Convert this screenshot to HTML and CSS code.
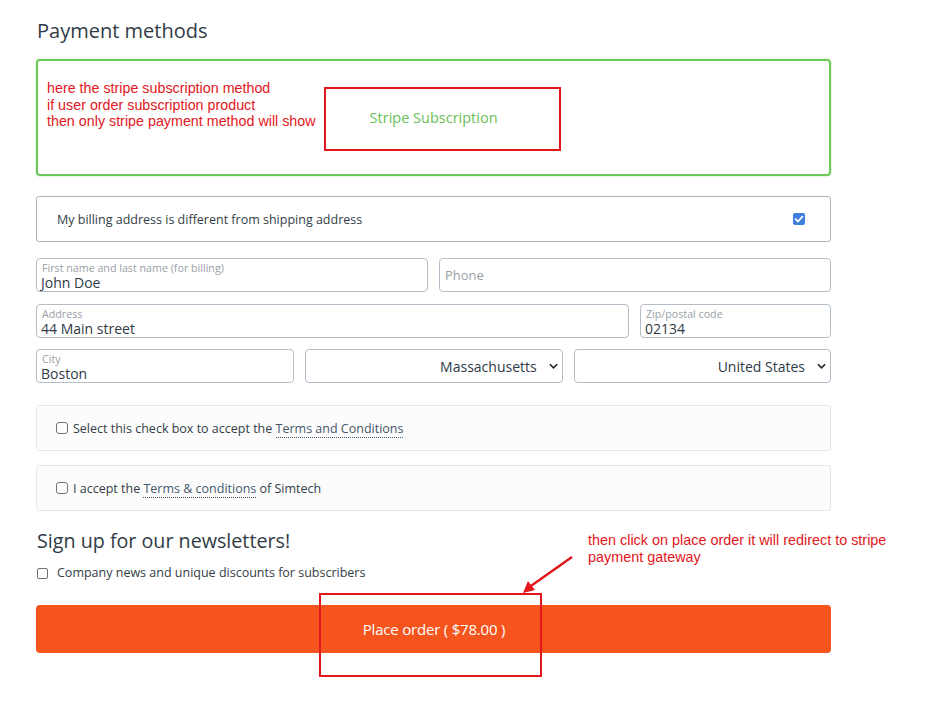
FILE: index.html
```html
<!DOCTYPE html>
<html>
<head>
<meta charset="utf-8">
<link rel="stylesheet" href="styles.css">
</head>
<body>
<div class="page">
  <h2 class="title">Payment methods</h2>

  <div class="method-box">
    <div class="note">here the stripe subscription method<br>if user order subscription product<br>then only stripe payment method will show</div>
    <div class="stripe-box"><span class="stripe-label">Stripe Subscription</span></div>
  </div>

  <div class="billing-toggle">
    <span>My billing address is different from shipping address</span>
    <span class="cb checked"><svg viewBox="0 0 12 12" width="12" height="12"><path d="M2.6 6.2 L5 8.5 L9.4 3.6" fill="none" stroke="#fff" stroke-width="1.8" stroke-linecap="round" stroke-linejoin="round"/></svg></span>
  </div>

  <div class="fields">
    <div class="row">
      <div class="field grow"><span class="lbl">First name and last name (for billing)</span><span class="val">John Doe</span></div>
      <div class="field grow placeholder"><span class="ph">Phone</span></div>
    </div>
    <div class="row">
      <div class="field address"><span class="lbl">Address</span><span class="val">44 Main street</span></div>
      <div class="field grow"><span class="lbl">Zip/postal code</span><span class="val">02134</span></div>
    </div>
    <div class="row">
      <div class="field grow"><span class="lbl">City</span><span class="val">Boston</span></div>
      <div class="field grow select"><span class="sel">Massachusetts</span><svg class="chev" viewBox="0 0 10 6" width="9" height="6"><path d="M1 1 L5 5 L9 1" fill="none" stroke="#222" stroke-width="1.8"/></svg></div>
      <div class="field grow select"><span class="sel">United States</span><svg class="chev" viewBox="0 0 10 6" width="9" height="6"><path d="M1 1 L5 5 L9 1" fill="none" stroke="#222" stroke-width="1.8"/></svg></div>
    </div>
  </div>

  <div class="terms first">
    <span class="cb"></span>
    <span>Select this check box to accept the <a class="tlink">Terms and Conditions</a></span>
  </div>
  <div class="terms second">
    <span class="cb"></span>
    <span>I accept the <a class="tlink">Terms &amp; conditions</a> of Simtech</span>
  </div>

  <h2 class="news-title">Sign up for our newsletters!</h2>
  <div class="news-line">
    <span class="cb small"></span>
    <span>Company news and unique discounts for subscribers</span>
  </div>

  <div class="place-order">Place order ( $78.00 )</div>
</div>

<div class="note2">then click on place order it will redirect to stripe<br>payment gateway</div>
<svg class="arrow" width="60" height="45" viewBox="0 0 60 45">
  <line x1="58" y1="4" x2="14" y2="35" stroke="#e3161c" stroke-width="2.4"/>
  <polygon points="9,40 14,28 21,37" fill="#e3161c"/>
</svg>
<div class="order-mark"></div>
</body>
</html>
```

FILE: styles.css
```css
* { box-sizing: border-box; }
html, body { margin: 0; padding: 0; background: #fff; }
body {
  font-family: "Open Sans", "Liberation Sans", sans-serif;
  color: #333d47;
  width: 935px;
  height: 714px;
  position: relative;
  overflow: hidden;
}
.page {
  margin-left: 36px;
  width: 795px;
  padding-top: 19px;
}
.title {
  margin: 0 0 16px 1px;
  font-size: 20px;
  line-height: 24px;
  font-weight: 400;
  color: #303b46;
}
.method-box {
  height: 117px;
  border: 2px solid #6cc95a;
  border-radius: 4px;
  box-shadow: 0 0 2px rgba(108, 201, 90, 0.6);
  display: flex;
  align-items: flex-start;
  padding-left: 9px;
}
.note {
  font-family: "Liberation Sans", Arial, sans-serif;
  font-size: 14.3px;
  line-height: 16.5px;
  color: #e3161c;
  margin-top: 19px;
  white-space: nowrap;
}
.stripe-box {
  margin-top: 26px;
  margin-left: 8px;
  width: 237px;
  height: 64px;
  border: 2px solid #e3161c;
  display: flex;
  align-items: center;
  padding-left: 44px;
}
.stripe-label {
  font-size: 14.5px;
  color: #6abf59;
  margin-top: -4px;
}
.billing-toggle {
  margin-top: 20px;
  height: 46px;
  border: 1px solid #aab6c0;
  border-radius: 3px;
  display: flex;
  align-items: center;
  justify-content: space-between;
  padding: 0 25px 0 20px;
  font-size: 12.5px;
  color: #333d47;
}
.cb {
  display: inline-block;
  width: 11px;
  height: 11px;
  border: 1px solid #707070;
  border-radius: 2px;
  background: #fff;
  flex: none;
}
.cb.checked {
  width: 12px;
  height: 12px;
  border: none;
  background: #3f7fe0;
  display: flex;
  align-items: center;
  justify-content: center;
  border-radius: 2px;
}
.fields {
  margin-top: 16px;
  display: flex;
  flex-direction: column;
  gap: 11.5px;
}
.row {
  display: flex;
  gap: 11px;
}
.field {
  height: 34px;
  border: 1px solid #b3bec8;
  border-radius: 4px;
  padding: 3px 5px 0 5px;
  display: flex;
  flex-direction: column;
  background: #fff;
}
.grow { flex: 1 1 0; }
.address { width: 593px; flex: none; }
.lbl {
  font-size: 10.7px;
  line-height: 12px;
  color: #9aa0a6;
  white-space: nowrap;
}
.val {
  font-size: 14px;
  line-height: 17px;
  color: #2f3a45;
  margin-left: -1px;
}
.placeholder {
  justify-content: center;
  padding: 0 5px;
}
.ph {
  font-size: 13px;
  color: #9aa0a6;
  margin-top: -1px;
}
.select {
  flex-direction: row;
  align-items: center;
  justify-content: flex-end;
  padding: 0 4px 0 5px;
}
.sel {
  font-size: 14px;
  color: #2f3a45;
  margin-right: 12px;
}
.chev { flex: none; }
.terms {
  height: 46px;
  border: 1px solid #e4e7ea;
  border-radius: 3px;
  background: #fcfcfc;
  display: flex;
  align-items: center;
  padding-left: 19px;
  gap: 5px;
  font-size: 12.5px;
  color: #333d47;
}
.terms.first { margin-top: 22px; }
.terms.second { margin-top: 14px; }
.terms .cb { width: 12px; height: 12px; border-radius: 3px; }
.tlink {
  color: #44576a;
  text-decoration: none;
  border-bottom: 1px dotted #44576a;
}
.news-title {
  margin: 18px 0 0 1px;
  font-size: 19.7px;
  line-height: 24px;
  font-weight: 400;
  color: #303b46;
}
.news-line {
  margin-top: 11px;
  display: flex;
  align-items: center;
  gap: 9px;
  font-size: 12.5px;
  line-height: 18px;
  color: #333d47;
  padding-left: 1px;
}
.place-order {
  margin-top: 23px;
  height: 48px;
  background: #f6541d;
  border-radius: 4px;
  color: #fff;
  font-size: 15px;
  display: flex;
  align-items: center;
  justify-content: center;
  letter-spacing: -0.2px;
  padding-left: 1px;
}
.note2 {
  position: absolute;
  left: 588px;
  top: 532px;
  font-family: "Liberation Sans", Arial, sans-serif;
  font-size: 14.4px;
  line-height: 17px;
  color: #e3161c;
  white-space: nowrap;
}
.arrow {
  position: absolute;
  left: 514px;
  top: 553px;
}
.order-mark {
  position: absolute;
  left: 319px;
  top: 593px;
  width: 223px;
  height: 84px;
  border: 2px solid #e3161c;
}
```
